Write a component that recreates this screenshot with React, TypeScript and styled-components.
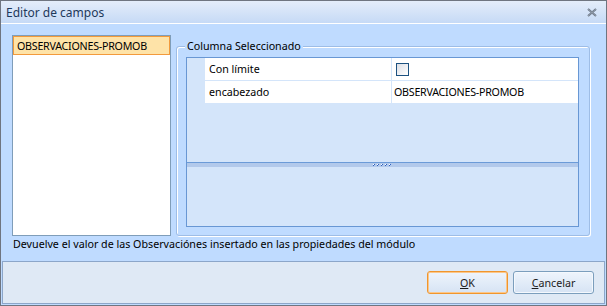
import styled, { createGlobalStyle } from "styled-components"

const GlobalStyle = createGlobalStyle`
    html, body {
        margin: 0;
        padding: 0;
    }
    body {
        font-family: "Noto Sans", "Liberation Sans", sans-serif;
        font-size: 10.7px;
        color: #000;
    }
`

export default function App() {
    return (
        <>
            <GlobalStyle />
            <Window>
                <TitleBar>
                    <span>Editor de campos</span>
                    <CloseIcon width="10" height="9" viewBox="0 0 10 9">
                        <path d="M1 1 L9 8 M9 1 L1 8" stroke="#6b7686" strokeWidth="2" />
                        <path d="M1 1 L9 8 M9 1 L1 8" stroke="#aab3c0" strokeWidth="0.6" />
                    </CloseIcon>
                </TitleBar>
                <Body>
                    <ContentRow>
                        <ListBox>
                            <ListItem $selected>OBSERVACIONES-PROMOB</ListItem>
                        </ListBox>
                        <GroupBox>
                            <Legend>Columna Seleccionado</Legend>
                            <PropertyGrid>
                                <GridRows>
                                    <GridRow>
                                        <Gutter />
                                        <NameCell>Con límite</NameCell>
                                        <ValueCell>
                                            <CheckBox />
                                        </ValueCell>
                                    </GridRow>
                                    <GridRow>
                                        <Gutter />
                                        <NameCell>encabezado</NameCell>
                                        <ValueCell $caps>OBSERVACIONES-PROMOB</ValueCell>
                                    </GridRow>
                                </GridRows>
                                <Splitter>
                                    <svg width="20" height="3" viewBox="0 0 20 3">
                                        {[0, 4, 8, 12, 16].map((x) => (
                                            <g key={x}>
                                                <rect x={x} y={1} width={1} height={1} fill="#2f62c0" />
                                                <rect x={x + 1} y={0} width={1} height={1} fill="#2f62c0" />
                                                <rect x={x} y={0} width={1} height={1} fill="#ffffff" />
                                            </g>
                                        ))}
                                    </svg>
                                </Splitter>
                                <HelpPane />
                            </PropertyGrid>
                        </GroupBox>
                    </ContentRow>
                    <Description>
                        Devuelve el valor de las Observaciónes insertado en las propiedades del módulo
                    </Description>
                </Body>
                <ButtonBar>
                    <Button $default>
                        <u>O</u>K
                    </Button>
                    <Button>
                        <u>C</u>ancelar
                    </Button>
                </ButtonBar>
            </Window>
        </>
    )
}

const Window = styled.div`
    width: 607px;
    height: 306px;
    box-sizing: border-box;
    border: 1px solid #6f7580;
    background: #bfdbff;
    display: flex;
    flex-direction: column;
`

const TitleBar = styled.div`
    height: 22px;
    flex: none;
    box-sizing: content-box;
    border-bottom: 1px solid #ffffff;
    background: linear-gradient(#e4edfa, #c6daf6);
    display: flex;
    align-items: center;
    justify-content: space-between;
    padding: 0 9px 0 5px;
    font-size: 12px;
    color: #1e395b;
`

const CloseIcon = styled.svg`
    display: block;
`

const Body = styled.div`
    flex: 1;
    display: flex;
    flex-direction: column;
    padding: 11px 15px 0 11px;
`

const ContentRow = styled.div`
    display: flex;
    align-items: flex-start;
    gap: 5px;
`

const ListBox = styled.div`
    width: 159px;
    height: 201px;
    box-sizing: border-box;
    border: 1px solid #7f9db9;
    background: #ffffff;
`

const ListItem = styled.div<{ $selected?: boolean }>`
    height: 19px;
    box-sizing: border-box;
    display: flex;
    align-items: center;
    padding-left: 3px;
    letter-spacing: -0.25px;
    border: 1px solid ${(p) => (p.$selected ? "#f29a3c" : "transparent")};
    background: ${(p) => (p.$selected ? "#fee3a8" : "transparent")};
    color: #000;
`

const GroupBox = styled.div`
    position: relative;
    width: 414px;
    height: 190px;
    margin-top: 11px;
    box-sizing: border-box;
    border: 1px solid #9ebde6;
    border-radius: 3px;
    box-shadow: inset 1px 1px 0 #ffffff, 1px 1px 0 #ffffff;
    padding: 10px 10px 8px 9px;
`

const Legend = styled.span`
    position: absolute;
    top: -9px;
    left: 8px;
    padding: 0 2px;
    background: #bfdbff;
    line-height: 16px;
    color: #000;
`

const PropertyGrid = styled.div`
    height: 100%;
    box-sizing: border-box;
    border: 1px solid #6897d4;
    background: #d4e5fa;
    display: flex;
    flex-direction: column;
`

const GridRows = styled.div`
    height: 104px;
    flex: none;
`

const GridRow = styled.div`
    display: grid;
    grid-template-columns: 18px 187px 1fr;
    height: 23px;
    box-sizing: border-box;
    border-bottom: 1px solid #d4e5fa;
`

const Gutter = styled.div`
    background: #d4e5fa;
`

const NameCell = styled.div`
    background: #ffffff;
    border-right: 1px solid #d4e5fa;
    display: flex;
    align-items: center;
    padding-left: 4px;
`

const ValueCell = styled.div<{ $caps?: boolean }>`
    background: #ffffff;
    display: flex;
    align-items: center;
    padding-left: 2px;
    letter-spacing: ${(p) => (p.$caps ? "-0.25px" : "0")};
`

const CheckBox = styled.div`
    width: 13px;
    height: 13px;
    box-sizing: border-box;
    margin-left: 2px;
    border: 1px solid #1c5180;
    background: linear-gradient(135deg, #dcdfe6, #ffffff);
`

const Splitter = styled.div`
    height: 5px;
    flex: none;
    box-sizing: border-box;
    border-top: 1px solid #6b9bd8;
    background: #b2c9eb;
    display: flex;
    align-items: center;
    justify-content: center;
    svg {
        display: block;
    }
`

const HelpPane = styled.div`
    flex: 1;
    background: #d4e5fa;
`

const Description = styled.div`
    margin-top: 1px;
    padding-left: 1px;
    line-height: 14px;
    white-space: nowrap;
`

const ButtonBar = styled.div`
    height: 43px;
    flex: none;
    box-sizing: border-box;
    margin: 0 1px 1px;
    border: 1px solid #8ca6c9;
    background: #dfe9f5;
    display: flex;
    justify-content: flex-end;
    align-items: flex-start;
    gap: 5px;
    padding: 9px 10px 0 0;
`

const Button = styled.div<{ $default?: boolean }>`
    width: 81px;
    height: 23px;
    box-sizing: border-box;
    border: 1px solid ${(p) => (p.$default ? "#f0962e" : "#7b9ebd")};
    border-radius: 3px;
    box-shadow: inset 0 0 0 1px ${(p) => (p.$default ? "#fbc78a" : "#f4f8fd")};
    background: linear-gradient(#eef4fc, #e2ecf8 50%, #d6e3f4);
    display: flex;
    align-items: center;
    justify-content: center;
    color: #1b1b1b;
    u {
        text-decoration-thickness: 1px;
    }
`
